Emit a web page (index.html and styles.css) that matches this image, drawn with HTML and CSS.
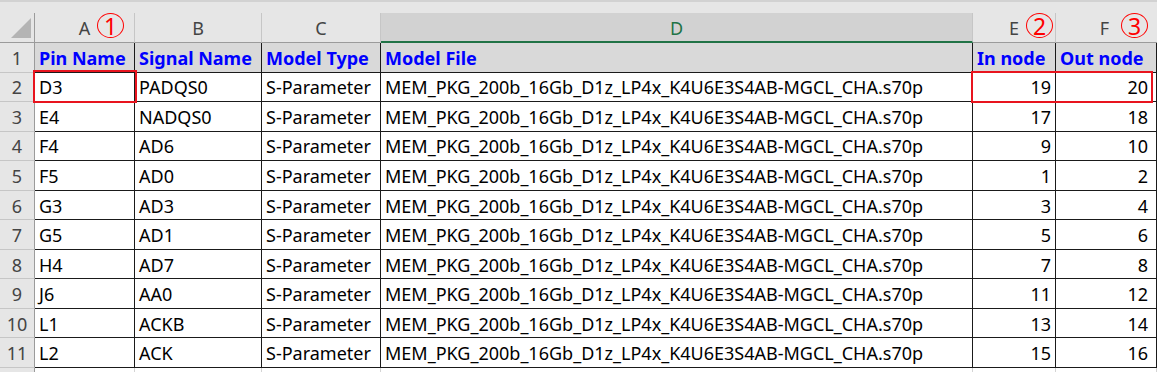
FILE: index.html
```html
<!DOCTYPE html>
<html lang="ko">
<head>
<meta charset="utf-8">
<link rel="stylesheet" href="styles.css">
</head>
<body>
<div class="sheet">
  <div class="topstrip"></div>

  <div class="corner"><span class="tri"></span></div>
  <div class="colhead">A<span class="mark m1">1</span></div>
  <div class="colhead">B</div>
  <div class="colhead">C</div>
  <div class="colhead sel">D</div>
  <div class="colhead">E<span class="mark m2">2</span></div>
  <div class="colhead last">F<span class="mark m3">3</span></div>

  <div class="rowhead">1</div>
  <div class="cell hdr">Pin Name</div>
  <div class="cell hdr">Signal Name</div>
  <div class="cell hdr">Model Type</div>
  <div class="cell hdr">Model File</div>
  <div class="cell hdr">In node</div>
  <div class="cell hdr last">Out node</div>

  <div class="rowhead">2</div>
  <div class="cell">D3</div>
  <div class="cell">PADQS0</div>
  <div class="cell">S-Parameter</div>
  <div class="cell">MEM_PKG_200b_16Gb_D1z_LP4x_K4U6E3S4AB-MGCL_CHA.s70p</div>
  <div class="cell num">19</div>
  <div class="cell num last">20</div>

  <div class="rowhead">3</div>
  <div class="cell">E4</div>
  <div class="cell">NADQS0</div>
  <div class="cell">S-Parameter</div>
  <div class="cell">MEM_PKG_200b_16Gb_D1z_LP4x_K4U6E3S4AB-MGCL_CHA.s70p</div>
  <div class="cell num">17</div>
  <div class="cell num last">18</div>

  <div class="rowhead">4</div>
  <div class="cell">F4</div>
  <div class="cell">AD6</div>
  <div class="cell">S-Parameter</div>
  <div class="cell">MEM_PKG_200b_16Gb_D1z_LP4x_K4U6E3S4AB-MGCL_CHA.s70p</div>
  <div class="cell num">9</div>
  <div class="cell num last">10</div>

  <div class="rowhead">5</div>
  <div class="cell">F5</div>
  <div class="cell">AD0</div>
  <div class="cell">S-Parameter</div>
  <div class="cell">MEM_PKG_200b_16Gb_D1z_LP4x_K4U6E3S4AB-MGCL_CHA.s70p</div>
  <div class="cell num">1</div>
  <div class="cell num last">2</div>

  <div class="rowhead">6</div>
  <div class="cell">G3</div>
  <div class="cell">AD3</div>
  <div class="cell">S-Parameter</div>
  <div class="cell">MEM_PKG_200b_16Gb_D1z_LP4x_K4U6E3S4AB-MGCL_CHA.s70p</div>
  <div class="cell num">3</div>
  <div class="cell num last">4</div>

  <div class="rowhead">7</div>
  <div class="cell">G5</div>
  <div class="cell">AD1</div>
  <div class="cell">S-Parameter</div>
  <div class="cell">MEM_PKG_200b_16Gb_D1z_LP4x_K4U6E3S4AB-MGCL_CHA.s70p</div>
  <div class="cell num">5</div>
  <div class="cell num last">6</div>

  <div class="rowhead">8</div>
  <div class="cell">H4</div>
  <div class="cell">AD7</div>
  <div class="cell">S-Parameter</div>
  <div class="cell">MEM_PKG_200b_16Gb_D1z_LP4x_K4U6E3S4AB-MGCL_CHA.s70p</div>
  <div class="cell num">7</div>
  <div class="cell num last">8</div>

  <div class="rowhead">9</div>
  <div class="cell">J6</div>
  <div class="cell">AA0</div>
  <div class="cell">S-Parameter</div>
  <div class="cell">MEM_PKG_200b_16Gb_D1z_LP4x_K4U6E3S4AB-MGCL_CHA.s70p</div>
  <div class="cell num">11</div>
  <div class="cell num last">12</div>

  <div class="rowhead">10</div>
  <div class="cell">L1</div>
  <div class="cell">ACKB</div>
  <div class="cell">S-Parameter</div>
  <div class="cell">MEM_PKG_200b_16Gb_D1z_LP4x_K4U6E3S4AB-MGCL_CHA.s70p</div>
  <div class="cell num">13</div>
  <div class="cell num last">14</div>

  <div class="rowhead">11</div>
  <div class="cell">L2</div>
  <div class="cell">ACK</div>
  <div class="cell">S-Parameter</div>
  <div class="cell">MEM_PKG_200b_16Gb_D1z_LP4x_K4U6E3S4AB-MGCL_CHA.s70p</div>
  <div class="cell num">15</div>
  <div class="cell num last">16</div>

  <div class="rowhead blank"></div>
  <div class="cell empty"></div>
  <div class="cell empty"></div>
  <div class="cell empty"></div>
  <div class="cell empty"></div>
  <div class="cell empty"></div>
  <div class="cell empty last"></div>

  <div class="box box-a2"></div>
  <div class="box box-ef2"></div>
</div>
</body>
</html>
```

FILE: styles.css
```css
html, body {
  margin: 0;
  padding: 0;
  background: #ffffff;
}

.sheet {
  position: relative;
  width: 1157px;
  height: 372px;
  overflow: hidden;
  display: grid;
  grid-template-columns: 35px 100px 127px 119px 592px 83px 101px;
  grid-template-rows: 13px 30px repeat(11, 29.55px) 20px;
  font-family: "Noto Sans", "Noto Sans CJK KR", sans-serif;
  font-size: 18px;
  color: #000;
}

.topstrip {
  grid-column: 1 / -1;
  background: #e6e6e6;
  border-top: 2px solid #d2d2d2;
  box-sizing: border-box;
}

.corner {
  background: #e6e6e6;
  border-right: 1px solid #9b9b9b;
  border-bottom: 1px solid #9b9b9b;
  box-sizing: border-box;
  display: flex;
  align-items: flex-end;
  justify-content: flex-end;
  padding: 0 3px 4px 0;
}

.tri {
  width: 0;
  height: 0;
  border-left: 20px solid transparent;
  border-bottom: 20px solid #b4b4b4;
}

.colhead {
  position: relative;
  background: #e6e6e6;
  border-right: 1px solid #c6c6c6;
  border-bottom: 1px solid #9b9b9b;
  box-sizing: border-box;
  display: flex;
  align-items: center;
  justify-content: center;
  color: #444;
  font-size: 18px;
  padding-top: 1px;
}

.colhead.sel {
  background: #d2d2d2;
  color: #217346;
  border-bottom: 2px solid #217346;
}

.colhead.last {
  border-right: none;
  padding-right: 4px;
}

.mark {
  position: absolute;
  top: 0px;
  width: 25px;
  height: 23px;
  border: 1.3px solid #f00;
  border-radius: 50%;
  color: #f00;
  font-size: 23px;
  line-height: 24px;
  text-align: center;
  font-family: "Noto Sans", sans-serif;
}

.m1 { left: 62px; }
.m2 { left: 53px; }
.m3 { left: 65px; }

.rowhead {
  background: #e6e6e6;
  border-right: 1px solid #9b9b9b;
  border-bottom: 1px solid #c6c6c6;
  box-sizing: border-box;
  display: flex;
  align-items: center;
  justify-content: center;
  color: #444;
  font-size: 18px;
  padding-top: 1px;
}

.cell {
  border-right: 1px solid #1a1a1a;
  border-bottom: 1px solid #1a1a1a;
  box-sizing: border-box;
  display: flex;
  align-items: center;
  padding: 1px 4px 0 4px;
  white-space: nowrap;
  overflow: hidden;
  background: #fff;
}

.cell.last {
  padding-right: 8px;
}

.cell.hdr {
  background: #d9d9d9;
  color: #0000ff;
  font-weight: 700;
}

.cell.num {
  justify-content: flex-end;
}

.cell.empty {
  border-right: 1px solid #d4d4d4;
  border-bottom: none;
}

.rowhead.blank {
  border-bottom: none;
}

.box {
  position: absolute;
  border: 2px solid #e8141e;
  box-sizing: border-box;
}

.box-a2 {
  left: 33px;
  top: 70px;
  width: 104px;
  height: 33px;
}

.box-ef2 {
  left: 971px;
  top: 71px;
  width: 182px;
  height: 32px;
}
```
